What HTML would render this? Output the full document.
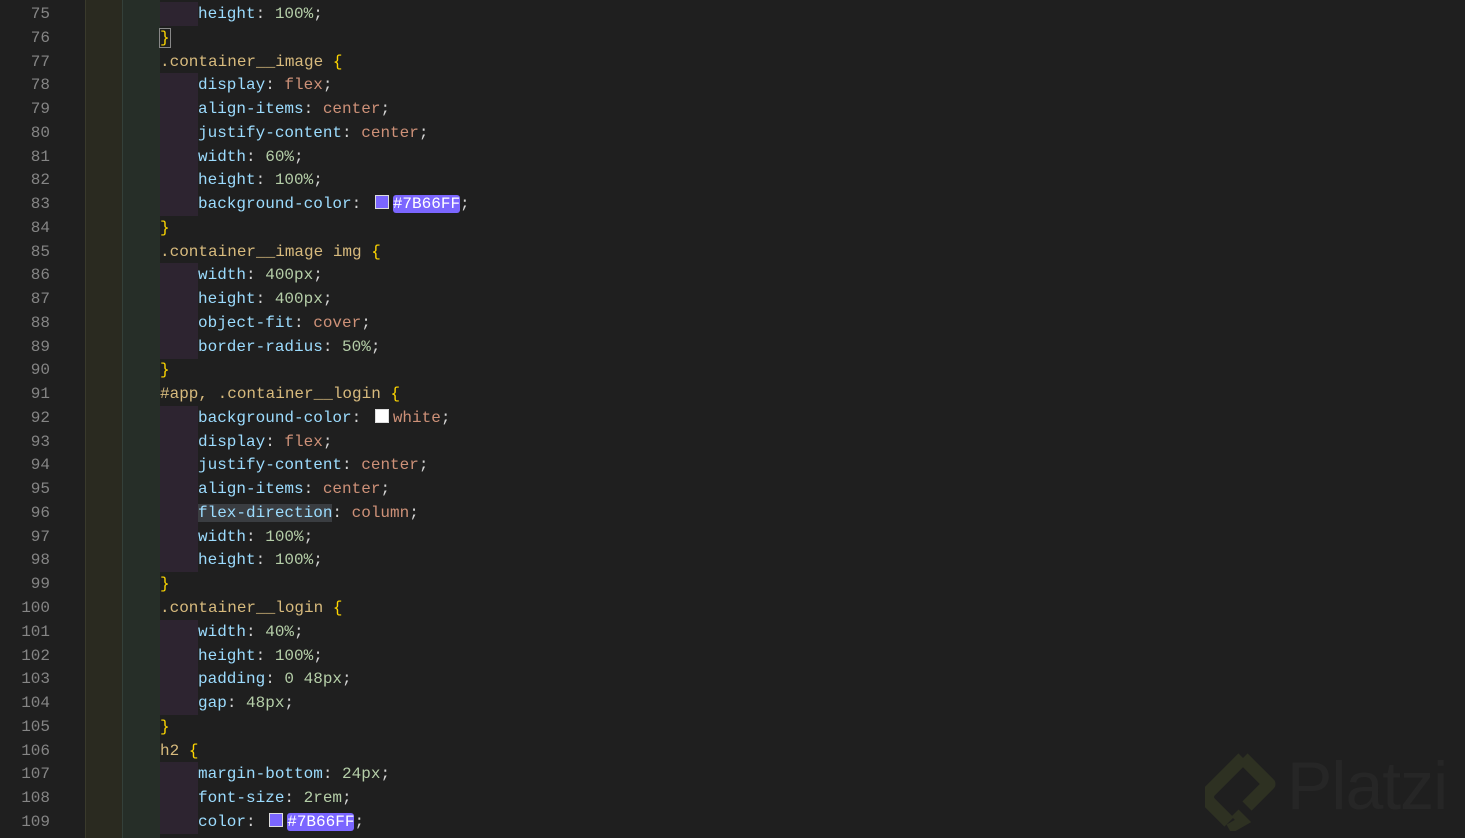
<!DOCTYPE html>
<html><head><meta charset="utf-8"><style>
html,body{margin:0;padding:0;width:1465px;height:838px;overflow:hidden;background:#1f1f1f;}
body{position:relative;font-family:"Liberation Mono",monospace;font-size:16px;}
.s1{position:absolute;left:85px;top:0;width:37px;height:838px;background:#2a2a20;}
.s2{position:absolute;left:122px;top:0;width:38px;height:838px;background:#262e28;}
.s1:before{content:"";position:absolute;left:0;top:0;width:1px;height:838px;background:#3a3a2c}
.s2:before{content:"";position:absolute;left:0;top:0;width:1px;height:838px;background:#34403a}
.ln{position:absolute;left:0;width:50px;text-align:right;color:#858585;height:24px;line-height:24px;}
.c{position:absolute;left:160px;white-space:pre;height:24px;line-height:24px;color:#d4d4d4;}
.in{padding-left:38px;}
.in:before{content:"";position:absolute;left:0;top:0;width:38px;height:24px;background:#2d2430;}
.p{color:#9cdcfe}.n{color:#b5cea8}.v{color:#ce9178}.s{color:#d7ba7d}.b{color:#ffd700}
.sw{display:inline-block;width:14px;height:14px;border:1px solid #ddd;box-sizing:border-box;vertical-align:-1px;margin-left:4px;margin-right:4px;}
.hl{background:#7b66ff;color:#fff;border-radius:3px;}
.sel{background:#3a3d41;}
.logo{position:absolute;left:1205px;top:745px;}
.pt{position:absolute;left:1287px;top:746px;font-family:"Liberation Sans",sans-serif;font-size:68px;color:#262626;letter-spacing:-1px;line-height:80px;}
</style></head><body>
<div class="s1"></div><div class="s2"></div>
<div id="L"></div>
<svg class="logo" width="72" height="86" viewBox="0 0 72 86"><path d="M38 13 L64 39 L42 61 M24 77 L5 58 Q0 52 5 46 L32 19 L38 13" fill="none" stroke="#2e3122" stroke-width="13" stroke-linejoin="round"/><path d="M30 68 L38 76 L24 84" fill="none" stroke="#2e3122" stroke-width="10"/></svg>
<div class="pt">Platzi</div>
<script>
var L=[
['75','in','<span class="p">height</span>: <span class="n">100%</span>;'],
['76','','<span class="b" style="outline:1px solid #888">}</span>'],
['77','','<span class="s">.container__image</span> <span class="b">{</span>'],
['78','in','<span class="p">display</span>: <span class="v">flex</span>;'],
['79','in','<span class="p">align-items</span>: <span class="v">center</span>;'],
['80','in','<span class="p">justify-content</span>: <span class="v">center</span>;'],
['81','in','<span class="p">width</span>: <span class="n">60%</span>;'],
['82','in','<span class="p">height</span>: <span class="n">100%</span>;'],
['83','in','<span class="p">background-color</span>: <span class="sw" style="background:#7b66ff;margin-left:4px"></span><span class="hl">#7B66FF</span>;'],
['84','','<span class="b">}</span>'],
['85','','<span class="s">.container__image img</span> <span class="b">{</span>'],
['86','in','<span class="p">width</span>: <span class="n">400px</span>;'],
['87','in','<span class="p">height</span>: <span class="n">400px</span>;'],
['88','in','<span class="p">object-fit</span>: <span class="v">cover</span>;'],
['89','in','<span class="p">border-radius</span>: <span class="n">50%</span>;'],
['90','','<span class="b">}</span>'],
['91','','<span class="s">#app, .container__login</span> <span class="b">{</span>'],
['92','in','<span class="p">background-color</span>: <span class="sw" style="background:#fff"></span><span class="v">white</span>;'],
['93','in','<span class="p">display</span>: <span class="v">flex</span>;'],
['94','in','<span class="p">justify-content</span>: <span class="v">center</span>;'],
['95','in','<span class="p">align-items</span>: <span class="v">center</span>;'],
['96','in','<span class="p sel">flex-direction</span>: <span class="v">column</span>;'],
['97','in','<span class="p">width</span>: <span class="n">100%</span>;'],
['98','in','<span class="p">height</span>: <span class="n">100%</span>;'],
['99','','<span class="b">}</span>'],
['100','','<span class="s">.container__login</span> <span class="b">{</span>'],
['101','in','<span class="p">width</span>: <span class="n">40%</span>;'],
['102','in','<span class="p">height</span>: <span class="n">100%</span>;'],
['103','in','<span class="p">padding</span>: <span class="n">0 48px</span>;'],
['104','in','<span class="p">gap</span>: <span class="n">48px</span>;'],
['105','','<span class="b">}</span>'],
['106','','<span class="s">h2</span> <span class="b">{</span>'],
['107','in','<span class="p">margin-bottom</span>: <span class="n">24px</span>;'],
['108','in','<span class="p">font-size</span>: <span class="n">2rem</span>;'],
['109','in','<span class="p">color</span>: <span class="sw" style="background:#7b66ff"></span><span class="hl">#7B66FF</span>;']
];
var h='';
for(var i=0;i<L.length;i++){var t=(2+i*23.76).toFixed(2);
h+='<div class="ln" style="top:'+t+'px">'+L[i][0]+'</div><div class="c '+L[i][1]+'" style="top:'+t+'px">'+L[i][2]+'</div>';}
document.getElementById('L').innerHTML=h;
</script>
</body></html>
